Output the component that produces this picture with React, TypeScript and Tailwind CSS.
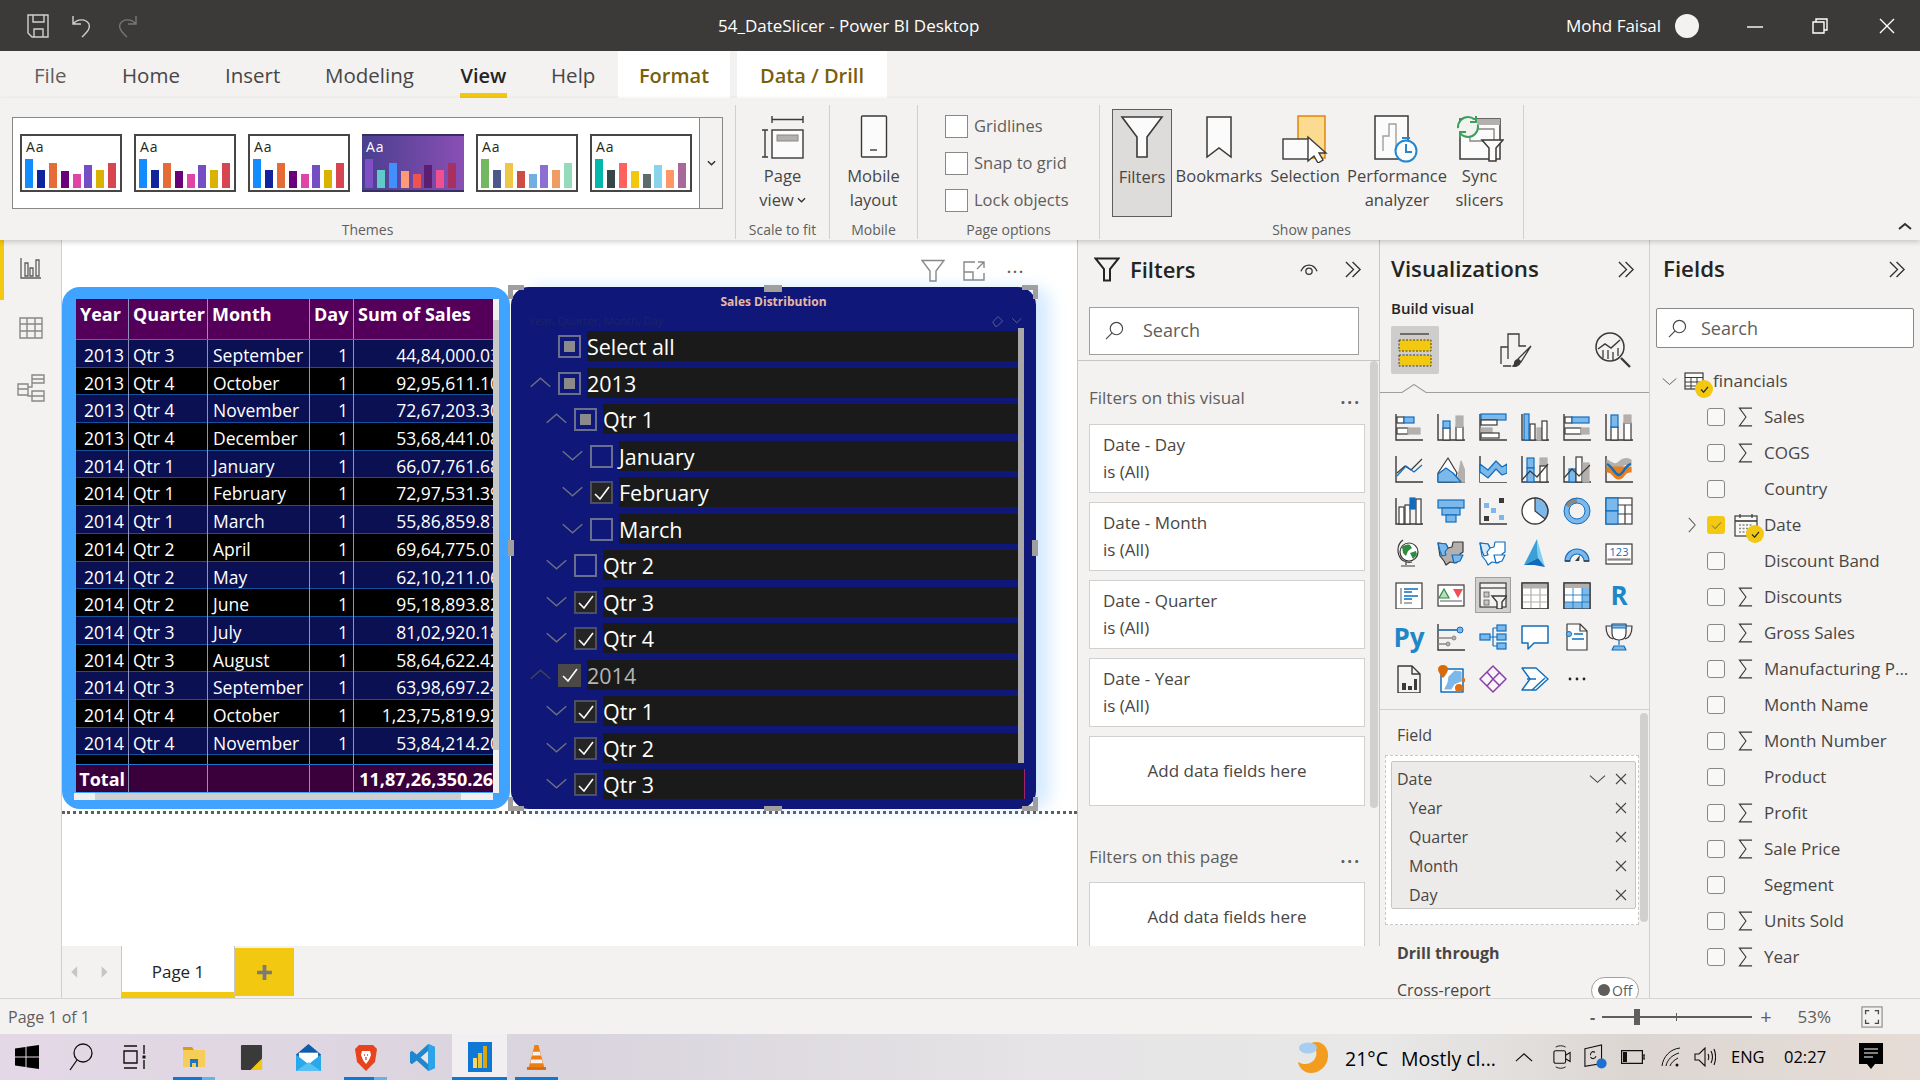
import type { ReactNode } from "react"

const D = "#3b3a39"
const B = "#106ebe"
const L = "#7db8ea"
const G = "#b3b0ad"

function Bx({ x, y, w, h, f = "#fff", s = D }: { x: number; y: number; w: number; h: number; f?: string; s?: string }) {
  return <rect x={x} y={y} width={w} height={h} fill={f} stroke={s} strokeWidth={1.2} />
}
function P({ d, f = "none", s = D, w = 1.2 }: { d: string; f?: string; s?: string; w?: number }) {
  return <path d={d} fill={f} stroke={s} strokeWidth={w} strokeLinejoin="round" />
}
const Axis = () => <path d="M1 1v26h27" fill="none" stroke={D} strokeWidth={1.4} />

function Chev({ dir, className, color = "#605e5c" }: { dir: "up" | "down" | "right"; className: string; color?: string }) {
  const d = dir === "up" ? "M1 10 10 2l9 8" : dir === "down" ? "M1 2l9 8 9-8" : "M6 1l8 9-8 9"
  const vb = dir === "right" ? "0 0 20 20" : "0 0 20 12"
  return (
    <svg viewBox={vb} className={className}>
      <path d={d} fill="none" stroke={color} strokeWidth={1.3} />
    </svg>
  )
}

function Cross() {
  return (
    <svg viewBox="0 0 12 12" className="w-[12px] h-[12px]">
      <path d="M1 1l10 10M11 1 1 11" stroke="#484644" strokeWidth={1.1} />
    </svg>
  )
}

function DoubleChev() {
  return (
    <svg viewBox="0 0 20 18" className="w-[19px] h-[17px]">
      <path d="M2 1l8 8-8 8M9 1l8 8-8 8" fill="none" stroke="#323130" strokeWidth={1.4} />
    </svg>
  )
}

function SearchGlass() {
  return (
    <svg viewBox="0 0 20 20" className="w-[19px] h-[19px]">
      <circle cx="12" cy="8" r="6.5" fill="none" stroke="#484644" strokeWidth={1.2} />
      <path d="M7.5 12.5 1 19" stroke="#484644" strokeWidth={1.2} />
    </svg>
  )
}

const themes = [
  { colors: ["#118DFF", "#12239E", "#E66C37", "#6B007B", "#E044A7", "#744EC2", "#D9B300", "#D64550"] },
  { colors: ["#118DFF", "#12239E", "#E66C37", "#6B007B", "#E044A7", "#744EC2", "#D9B300", "#D64550"] },
  { colors: ["#118DFF", "#12239E", "#E66C37", "#6B007B", "#E044A7", "#744EC2", "#D9B300", "#D64550"] },
  { colors: ["#7F4FC4", "#5ECBC8", "#4090FF", "#FF9A76", "#F0524F", "#5C1F70", "#F0508F", "#A83060"], dark: true },
  { colors: ["#73B761", "#4A588A", "#ECC846", "#CD4C46", "#71AFE2", "#8D6FD1", "#EE9E64", "#95DABB"] },
  { colors: ["#01B8AA", "#374649", "#FD625E", "#F2C80F", "#5F6B6D", "#8AD4EB", "#FE9666", "#A66999"] },
]
const barHeights = [29, 18, 25, 17, 14, 23, 18, 25]

function ThemeThumb({ colors, dark }: { colors: string[]; dark?: boolean }) {
  return (
    <div
      className={
        dark
          ? "w-[102px] h-[58px] shrink-0 border-y-2 border-[#35305f] bg-[linear-gradient(90deg,#4a3f8f,#8a4fb5)] px-[3px] text-white"
          : "w-[102px] h-[58px] shrink-0 border-2 border-[#484644] bg-white px-[3px] text-[#252423]"
      }
    >
      <div className="h-[23px] pl-[1px] text-[14px] leading-[21px] tracking-[1px]">Aa</div>
      <div className="h-[29px] flex items-end gap-[3.9px]">
        {colors.map((c, i) => (
          <div key={i} className="w-[8px]" style={{ height: barHeights[i], background: c }} />
        ))}
      </div>
    </div>
  )
}

function RibbonGroup({ label, className, children }: { label: string; className: string; children: ReactNode }) {
  return (
    <div className={"h-[134px] mt-[7px] border-r border-[#d2d0ce] flex flex-col shrink-0 " + className}>
      <div className="flex-1 flex min-h-0">{children}</div>
      <div className="h-[18px] text-[14px] leading-[18px] text-[#605e5c] text-center whitespace-nowrap">{label}</div>
    </div>
  )
}

function RibbonBtn({ className, icon, lines }: { className: string; icon: ReactNode; lines: ReactNode[] }) {
  return (
    <div className={"flex flex-col items-center shrink-0 pt-[10px] text-[#484644] " + className}>
      <div className="h-[49px] flex items-start justify-center">{icon}</div>
      {lines.map((l, i) => (
        <div key={i} className="text-[16.5px] leading-[24px] whitespace-nowrap">
          {l}
        </div>
      ))}
    </div>
  )
}

function RibbonCheck({ label }: { label: string }) {
  return (
    <div className="flex items-center h-[37px] text-[16.5px] text-[#605e5c]">
      <div className="w-[23px] h-[23px] bg-white border border-[#8a8886] mr-[6px]" />
      {label}
    </div>
  )
}

const salesRows = [
  ["2013", "Qtr 3", "September", "44,84,000.03"],
  ["2013", "Qtr 4", "October", "92,95,611.10"],
  ["2013", "Qtr 4", "November", "72,67,203.30"],
  ["2013", "Qtr 4", "December", "53,68,441.08"],
  ["2014", "Qtr 1", "January", "66,07,761.68"],
  ["2014", "Qtr 1", "February", "72,97,531.39"],
  ["2014", "Qtr 1", "March", "55,86,859.87"],
  ["2014", "Qtr 2", "April", "69,64,775.07"],
  ["2014", "Qtr 2", "May", "62,10,211.06"],
  ["2014", "Qtr 2", "June", "95,18,893.82"],
  ["2014", "Qtr 3", "July", "81,02,920.18"],
  ["2014", "Qtr 3", "August", "58,64,622.42"],
  ["2014", "Qtr 3", "September", "63,98,697.24"],
  ["2014", "Qtr 4", "October", "1,23,75,819.92"],
  ["2014", "Qtr 4", "November", "53,84,214.20"],
]

function SalesTable() {
  const line = "border-r border-[#8f94bd]"
  const grid = "grid grid-cols-[53px_79px_102px_44px_139px] text-white"
  return (
    <div className="w-[448px] h-[522px] shrink-0 rounded-[18px] bg-[#40a3ff] pt-[12px] pl-[14px] relative">
      <div className={grid + " w-[417px] h-[41px] bg-[#54005a] font-bold text-[18px] leading-[30px] border-b border-[#1f77d0]"}>
        <div className={line + " pl-[4px]"}>Year</div>
        <div className={line + " pl-[4px] whitespace-nowrap"}>Quarter</div>
        <div className={line + " pl-[4px]"}>Month</div>
        <div className={line + " pl-[4px]"}>Day</div>
        <div className="pl-[4px] whitespace-nowrap">Sum of Sales</div>
      </div>
      <div className="w-[417px] h-[424px] overflow-hidden bg-black">
        {salesRows.map((r, i) => (
          <div
            key={i}
            className={
              grid +
              " h-[27.7px] text-[17.5px] leading-[30px] border-b border-[#15509c] " +
              (i % 2 === 0 ? "bg-[#0a1052]" : "bg-black")
            }
          >
            <div className={line + " text-right pr-[4px]"}>{r[0]}</div>
            <div className={line + " pl-[4px]"}>{r[1]}</div>
            <div className={line + " pl-[5px] whitespace-nowrap"}>{r[2]}</div>
            <div className={line + " text-right pr-[5px]"}>1</div>
            <div className="overflow-hidden">
              <div className="w-[146px] text-right whitespace-nowrap">{r[3]}</div>
            </div>
          </div>
        ))}
        <div className={grid + " h-[10px]"}>
          <div className={line} />
          <div className={line} />
          <div className={line} />
          <div className={line} />
          <div />
        </div>
      </div>
      <div className={grid + " w-[417px] h-[28px] bg-[#3a003c] font-bold text-[18px] leading-[28px] border-t border-[#1f77d0]"}>
        <div className={line + " text-right pr-[3px]"}>Total</div>
        <div className={line} />
        <div className={line} />
        <div className={line} />
        <div className="overflow-hidden">
          <div className="w-[139px] text-right whitespace-nowrap">11,87,26,350.26</div>
        </div>
      </div>
      {/* scrollbars */}
      <div className="absolute left-[431px] top-[12px] w-[6px] h-[494px] bg-[#f0f0f0]">
        <div className="mt-[21px] h-[430px] bg-[#c8c8c8]" />
      </div>
      <div className="absolute left-[12px] top-[506px] w-[419px] h-[7px] bg-[#f0f0f0] pl-[21px]">
        <div className="w-[366px] h-[7px] bg-[#cfcfcf]" />
      </div>
    </div>
  )
}

type BoxState = "partial" | "none" | "check" | "hover"

function SlicerRow({ level, label, chev, state, last }: { level: 0 | 1 | 2; label: string; chev?: "up" | "down"; state: BoxState; last?: boolean }) {
  const indent = level === 0 ? "ml-[18px]" : level === 1 ? "ml-[34px]" : "ml-[50px]"
  const boxClass =
    state === "hover"
      ? "bg-[#4a4948] border-[#4a4948]"
      : state === "check"
        ? "bg-[#252525] border-[#4c4f63]"
        : "border-[#6a6f8e]"
  return (
    <div className="flex h-[30px] items-start shrink-0">
      <div className={"w-[23px] mr-[6px] pt-[8px] shrink-0 " + indent}>
        {chev && <Chev dir={chev} className="w-[23px] h-[13px]" color={state === "hover" ? "#45454e" : "#6e7080"} />}
      </div>
      <div className={"w-[23px] h-[23px] mt-[4px] mr-[6px] shrink-0 border-2 flex items-center justify-center " + boxClass}>
        {state === "partial" && <div className="w-[11px] h-[11px] bg-[#8a8a8a]" />}
        {(state === "check" || state === "hover") && (
          <svg viewBox="0 0 16 14" className="w-[16px] h-[14px]">
            <path d="M1 8l5 5 9-12" fill="none" stroke="#fff" strokeWidth={1.6} />
          </svg>
        )}
      </div>
      <div
        className={
          "h-[30px] flex-1 bg-[#1a1a1a] text-[21.5px] leading-[31px] " +
          (state === "hover" ? "text-[#b5b5b5] " : "text-white ") +
          (last ? "mr-[11px] border-r border-[#a0246e]" : "mr-[18px]")
        }
      >
        {label}
      </div>
    </div>
  )
}

function Handle({ className }: { className: string }) {
  return <div className={"absolute bg-[#a19f9d] " + className} />
}

function Slicer() {
  return (
    <div className="w-[525px] h-[522px] ml-[1px] shrink-0 rounded-[18px] bg-[#0f1878] relative shadow-[14px_0_16px_rgba(64,160,255,0.22)]">
      <div className="h-[24px] pt-[6px] text-center text-[12px] leading-[18px] font-bold text-[#e9b7a5]">Sales Distribution</div>
      <div className="h-[20px] pl-[18px] flex items-center text-[11px] text-[#1c2463]">
        Year, Quarter, Month, Day
        <svg viewBox="0 0 36 14" className="ml-auto mr-[13px] w-[32px] h-[14px]">
          <path d="M2 8l6-6 5 5-6 6H5z" fill="none" stroke="#5f6596" strokeWidth={1} />
          <path d="M24 4l5 5 5-5" fill="none" stroke="#5f6596" strokeWidth={1} />
        </svg>
      </div>
      <div className="flex flex-col gap-[6.5px]">
        <SlicerRow level={0} label="Select all" state="partial" />
        <SlicerRow level={0} label="2013" chev="up" state="partial" />
        <SlicerRow level={1} label="Qtr 1" chev="up" state="partial" />
        <SlicerRow level={2} label="January" chev="down" state="none" />
        <SlicerRow level={2} label="February" chev="down" state="check" />
        <SlicerRow level={2} label="March" chev="down" state="none" />
        <SlicerRow level={1} label="Qtr 2" chev="down" state="none" />
        <SlicerRow level={1} label="Qtr 3" chev="down" state="check" />
        <SlicerRow level={1} label="Qtr 4" chev="down" state="check" />
        <SlicerRow level={0} label="2014" chev="up" state="hover" />
        <SlicerRow level={1} label="Qtr 1" chev="down" state="check" />
        <SlicerRow level={1} label="Qtr 2" chev="down" state="check" />
        <SlicerRow level={1} label="Qtr 3" chev="down" state="check" last />
      </div>
      {/* slicer scrollbar */}
      <div className="absolute left-[507px] top-[41px] w-[6px] h-[435px] bg-[#a8a6a6]" />
      {/* selection handles */}
      <Handle className="left-[-3px] top-[-2px] w-[16px] h-[5px]" />
      <Handle className="left-[-3px] top-[-2px] w-[5px] h-[14px]" />
      <Handle className="right-[-2px] top-[-2px] w-[16px] h-[5px]" />
      <Handle className="right-[-2px] top-[-2px] w-[5px] h-[14px]" />
      <Handle className="left-[-3px] bottom-[-2px] w-[16px] h-[5px]" />
      <Handle className="left-[-3px] bottom-[-2px] w-[5px] h-[14px]" />
      <Handle className="right-[-2px] bottom-[-2px] w-[16px] h-[5px]" />
      <Handle className="right-[-2px] bottom-[-2px] w-[5px] h-[14px]" />
      <Handle className="left-[253px] top-[-2px] w-[18px] h-[7px]" />
      <Handle className="left-[253px] bottom-[-2px] w-[18px] h-[5px]" />
      <Handle className="left-[-3px] top-[253px] w-[6px] h-[16px]" />
      <Handle className="right-[-2px] top-[253px] w-[6px] h-[16px]" />
    </div>
  )
}

function FilterCard({ title }: { title: string }) {
  return (
    <div className="w-[276px] h-[69px] mb-[9px] bg-white border border-[#d2d0ce] pl-[13px] pb-[2px] flex flex-col justify-center text-[17px] leading-[27px] text-[#484644]">
      <div>{title}</div>
      <div>is (All)</div>
    </div>
  )
}

function AddFields() {
  return (
    <div className="w-[276px] h-[70px] bg-white border border-[#d2d0ce] flex items-center justify-center text-[17px] text-[#484644] shrink-0">
      Add data fields here
    </div>
  )
}

function FiltersPane() {
  return (
    <div className="w-[303px] h-[706px] shrink-0 border-l border-r border-[#c8c6c4] bg-[#f3f2f1] relative overflow-hidden">
      <div className="h-[58px] flex items-center pl-[16px] pr-[16px]">
        <svg viewBox="0 0 26 26" className="w-[26px] h-[26px] mr-[10px]">
          <path d="M1.5 2.5h23L16 13v11.5h-6V13z" fill="none" stroke="#252423" strokeWidth={2} />
        </svg>
        <span className="text-[22px] font-semibold text-[#252423]">Filters</span>
        <svg viewBox="0 0 20 14" className="ml-auto w-[18px] h-[13px] mr-[26px]">
          <path d="M1 9c4-9 14-9 18 0" fill="none" stroke="#323130" strokeWidth={1.4} />
          <circle cx="10" cy="9" r="3.5" fill="none" stroke="#323130" strokeWidth={1.4} />
        </svg>
        <DoubleChev />
      </div>
      <div className="ml-[11px] mt-[9px] w-[270px] h-[48px] bg-white border border-[#a19f9d] flex items-center pl-[15px] pb-[2px] text-[18px] text-[#605e5c]">
        <SearchGlass />
        <span className="ml-[19px]">Search</span>
      </div>
      <div className="mt-[5px] h-[1px] bg-[#c8c6c4]" />
      <div className="h-[63px] pt-[11px] flex items-center pl-[11px] pr-[18px] text-[17px] text-[#605e5c]">
        Filters on this visual
        <span className="ml-auto font-bold tracking-[2px]">...</span>
      </div>
      <div className="ml-[11px]">
        <FilterCard title="Date - Day" />
        <FilterCard title="Date - Month" />
        <FilterCard title="Date - Quarter" />
        <FilterCard title="Date - Year" />
        <AddFields />
        <div className="h-[76px] pt-[26px] flex items-center pr-[18px] text-[17px] text-[#605e5c]">
          Filters on this page
          <span className="ml-auto font-bold tracking-[2px]">...</span>
        </div>
        <AddFields />
      </div>
      <div className="absolute left-[292px] top-[121px] w-[8px] h-[447px] rounded-full bg-[#d2d0ce]" />
    </div>
  )
}

const vizIcons: ReactNode[] = [
  <><Axis /><Bx x={2} y={4} w={7} h={6} /><Bx x={9} y={4} w={10} h={6} f={L} s={B} /><Bx x={2} y={15} w={11} h={6} /><Bx x={13} y={15} w={12} h={6} f={G} s={G} /></>,
  <><Axis /><Bx x={6} y={15} w={7} h={12} /><Bx x={6} y={8} w={7} h={7} f={L} s={B} /><Bx x={19} y={14} w={7} h={13} /><Bx x={19} y={3} w={7} h={11} f={G} s={G} /></>,
  <><Axis /><Bx x={2} y={1} w={25} h={6} f={L} s={B} /><Bx x={2} y={7} w={16} h={5} /><Bx x={2} y={15} w={11} h={5} f={G} s={G} /><Bx x={2} y={20} w={18} h={5} /></>,
  <><Axis /><Bx x={3} y={1} w={5} h={26} f={L} s={B} /><Bx x={9} y={11} w={5} h={16} /><Bx x={16} y={15} w={5} h={12} f={G} s={G} /><Bx x={21} y={8} w={5} h={19} /></>,
  <><Axis /><Bx x={2} y={4} w={7} h={6} /><Bx x={9} y={4} w={17} h={6} f={L} s={B} /><Bx x={2} y={15} w={16} h={6} /><Bx x={18} y={15} w={8} h={6} f={G} s={G} /></>,
  <><Axis /><Bx x={6} y={14} w={7} h={13} /><Bx x={6} y={2} w={7} h={12} f={L} s={B} /><Bx x={19} y={10} w={7} h={17} /><Bx x={19} y={2} w={7} h={8} f={G} s={G} /></>,
  <><Axis /><P d="M2 18l8-7 6 4 11-11" s={D} /><P d="M2 21l9-10 8 6 8-7" s={B} /></>,
  <><P d="M1 27h27" w={1.4} /><P d="M20 27l4-21 4 10v11z" f={G} s={G} /><P d="M1 18 11 3l9 15-3 9H1z" f="#fff" /><P d="M1 27v-8l8-6 7 5 8 9z" f={L} s={B} /></>,
  <><Axis /><P d="M1 9l8 6 8-9 6 6 5-3v9l-5 2-6-6-8 9-8-6z" f={L} s={B} /><P d="M1 18l8 6 8-7 6 5 5-2v7H1z" f="#f3f3f3" s={D} w={0} /></>,
  <><Axis /><Bx x={6} y={3} w={7} h={10} f={L} s={B} /><Bx x={6} y={13} w={7} h={14} f={L} s={B} /><Bx x={19} y={3} w={7} h={8} f={G} s={G} /><Bx x={19} y={11} w={7} h={16} /><P d="M1 25l8-9 7 6 11-13" /></>,
  <><Axis /><Bx x={6} y={14} w={7} h={13} f={L} s={B} /><Bx x={13} y={2} w={6} h={25} /><Bx x={20} y={8} w={6} h={19} f={G} s={G} /><P d="M1 23l8-9 7 7 11-11" /></>,
  <><Axis /><P d="M2 5c6 3 8 6 12 2s8-4 12-2v5c-5-2-7 0-12 3S6 12 2 10z" f={G} s={G} /><P d="M2 12h24v5c-7-2-6 7-12 7S8 16 2 17z" f="#e67e22" s="#e67e22" /><P d="M2 9c6 3 8 11 12 11s6-10 12-11" s={B} w={2.4} /></>,
  <><Axis /><Bx x={4} y={10} w={5} h={17} /><Bx x={10} y={8} w={5} h={19} /><Bx x={15} y={1} w={5} h={11} f={B} s={B} /><Bx x={21} y={2} w={5} h={25} /></>,
  <><Bx x={1} y={3} w={26} h={8} f={L} s={B} /><Bx x={5} y={11} w={18} h={7} f={L} s={B} /><Bx x={9} y={18} w={10} h={7} f={L} s={B} /></>,
  <><Axis /><rect x={5} y={6} width={5} height={5} fill={L} /><rect x={20} y={1} width={5} height={5} fill={D} /><rect x={12} y={11} width={5} height={5} fill={L} /><rect x={5} y={19} width={5} height={5} fill={D} /><rect x={20} y={18} width={5} height={5} fill={L} /></>,
  <><circle cx="14" cy="14" r="13" fill="#fff" stroke={D} strokeWidth={1.3} /><path d="M14 1a13 13 0 0 1 10 21L14 14z" fill={L} stroke={D} strokeWidth={1.2} /></>,
  <><circle cx="14" cy="14" r="10.5" fill="none" stroke={L} strokeWidth={5} /><path d="M4 9A11 11 0 0 1 14 3.500" fill="none" stroke="#8a8886" strokeWidth={5} /><circle cx="14" cy="14" r="13" fill="none" stroke={B} strokeWidth={1} /><circle cx="14" cy="14" r="8" fill="#f3f2f1" stroke={B} strokeWidth={1} /></>,
  <><Bx x={1} y={1} w={26} h={26} /><Bx x={1} y={1} w={12} h={13} f={L} s={B} /><Bx x={1} y={14} w={12} h={13} f={L} s={B} /><path d="M13 8h14M20 8v19M13 17h14" stroke={D} strokeWidth={1.2} /></>,
  <><circle cx="14" cy="13" r="9" fill="#fff" stroke={D} strokeWidth={1.2} /><path d="M7 8c3-2 5-3 8-2l2 3-4 3-2 5-3-3zM15 14l6-2 1 4-4 4z" fill="#2e8b40" /><path d="M8 1C2 5 1 15 7 21c3 2 6 3 10 2M11 23v3M6 27h14" fill="none" stroke={D} strokeWidth={1.2} /></>,
  <><P d="M1 4l8 1 2 4 4-1 1-5h10v10l-3 2 1 4-5 5-6-1-4 3-2-4-4-5z" f={G} /><P d="M1 4l8 1 2 4-3 4 1 3-4 1-2-5z" f={L} s={B} /><P d="M15 16h11l-3 6-6 2z" f={L} s={B} /></>,
  <><P d="M1 4l8 1 2 4 4-1 1-5h10v10l-3 2 1 4-5 5-6-1-4 3-2-4-4-5z" f="#fff" s={B} /><P d="M1 4l8 1 2 4-3 4 1 3-4 1-2-5z" f="#d7e9f8" s={B} /><P d="M15 16h11l-3 6-6 2z" f="#fff" s={B} /></>,
  <><path d="M16 0 3 26l14-7z" fill="#3aa0d8" /><path d="M16 0l8 28-7-9z" fill="#7fd0f0" /><path d="M17 19l-14 7h10l11 2z" fill="#0f6cbd" /></>,
  <><path d="M2 22a12 12 0 0 1 24 0h-5a7 7 0 0 0-14 0z" fill={L} stroke={B} strokeWidth={1.2} /><path d="M2 22h5M21 22h5" stroke={D} strokeWidth={1.3} /><path d="M12 22l5-6-1 6z" fill={D} /></>,
  <><Bx x={1} y={5} w={26} h={20} /><Bx x={3} y={20} w={22} h={1} f="#8a8886" s="#8a8886" /><text x={14} y={17} textAnchor="middle" fontSize="11" fill={B} fontFamily="Open Sans">123</text></>,
  <><Bx x={1} y={2} w={26} h={26} /><path d="M6 7v16" stroke="#8a8886" strokeWidth={1.4} /><path d="M9 8h14M9 11h8M9 15h14M9 18h8" stroke={B} strokeWidth={1.6} /><path d="M9 22h8" stroke="#8a8886" strokeWidth={1.4} /></>,
  <><Bx x={1} y={4} w={26} h={21} /><path d="M7 8l5 9H2z" fill="#b4e0bc" stroke="#2e8b40" strokeWidth={1.2} /><path d="M16 8h10l-5 9z" fill="#f05050" /><path d="M3 20h22" stroke="#8a8886" strokeWidth={1.4} /></>,
  <><Bx x={1} y={2} w={26} h={24} f="#f3f2f1" /><path d="M1 7h26" stroke={D} strokeWidth={1.2} /><rect x={5} y={11} width={5} height={5} fill="#c8c6c4" stroke="#605e5c" strokeWidth={0.8} /><rect x={5} y={19} width={5} height={5} fill="#c8c6c4" stroke="#605e5c" strokeWidth={0.8} /><path d="M13 15h15l-5 6v7h-5v-7z" fill="#f3f2f1" stroke={D} strokeWidth={1.4} /></>,
  <><Bx x={1} y={2} w={26} h={26} /><rect x={1} y={2} width={26} height={5} fill={G} /><path d="M1 7h26M1 14h26M1 21h26M10 7v21M19 7v21" stroke={G} strokeWidth={1.2} /><rect x={1} y={2} width={26} height={26} fill="none" stroke={D} strokeWidth={1.3} /></>,
  <><Bx x={1} y={2} w={26} h={26} /><rect x={1} y={2} width={26} height={5} fill={G} /><rect x={19} y={7} width={8} height={21} fill={L} /><rect x={1} y={21} width={26} height={7} fill={L} /><path d="M1 14h26M1 21h26M10 7v21M19 7v21" stroke={B} strokeWidth={0.8} /><rect x={1} y={2} width={26} height={26} fill="none" stroke={D} strokeWidth={1.3} /></>,
  null,
  null,
  <><Axis /><path d="M1 7h20M1 15h15M1 21h10" stroke="#8a8886" strokeWidth={1.3} /><path d="M1 7h20" stroke={B} strokeWidth={1.3} /><circle cx="23" cy="7" r="3" fill={L} stroke={B} /><circle cx="17" cy="15" r="2" fill={G} stroke="#8a8886" /><circle cx="11" cy="21" r="2" fill={G} stroke="#8a8886" /></>,
  <><Bx x={1} y={11} w={10} h={6} f={L} s={B} /><Bx x={18} y={2} w={9} h={6} f={L} s={B} /><Bx x={18} y={11} w={9} h={6} f={L} s={B} /><Bx x={18} y={20} w={9} h={6} f={L} s={B} /><path d="M11 14h7M14 5v18M14 5h4M14 23h4" stroke={B} fill="none" strokeWidth={1.2} /></>,
  <><P d="M1 3h26v17H13l-6 6v-6H1z" f="#fff" s={B} w={1.5} /></>,
  <><P d="M4 1h13l7 7v19H4z" f="#fbfbfb" /><P d="M17 1v7h7" /><circle cx="6" cy="11" r="2.500" fill={L} stroke={B} /><path d="M11 11h9M9 16h12" stroke={B} strokeWidth={1.3} /></>,
  <><P d="M7 3H1c0 9 3 12 7 13M21 3h6c0 9-3 12-7 13" /><P d="M7 1h14v9c0 5-3 7-7 7s-7-2-7-7z" f="#fff" /><rect x={7} y={2} width={14} height={3} fill={L} stroke={B} /><P d="M14 17v5M9 23h10l2 4H7z" f={L} s={B} /></>,
  <><P d="M3 1h14l8 8v19H3z" f="#f3f2f1" w={1.4} /><P d="M17 1v8h8" w={1.4} /><rect x={7} y={18} width={4} height={7} fill={D} /><rect x={13} y={21} width={4} height={4} fill={D} /><rect x={19} y={14} width={3} height={11} fill={D} /></>,
  <><P d="M4 4h22v23H4z" s={B} w={1.5} f="#fff" /><P d="M8 24l3-6 1-6 6-6 6 1v9l-7 3-3 5z" f={L} s={L} /><path d="M6 0c3 0 5 2 5 4 0 4-5 9-5 9S1 8 1 4c0-2 2-4 5-4z" fill="#d96a0a" /><circle cx="22" cy="23" r="4" fill="#e0700f" /><circle cx="26.500" cy="15" r="2" fill="#e0700f" /></>,
  <><P d="M14 1l13 13-13 13L1 14z" s="#8b3fa8" w={1.5} f="#f9f3fb" /><P d="M8 7l6 7-6 7M14 14l7-7M14 14l7 7" s="#8b3fa8" w={1.5} /></>,
  <><P d="M1 3h14l12 11-12 11H1l8-11z" s={B} w={1.4} f="#fff" /><path d="M11 25l13-12M6 14h9" stroke={B} strokeWidth={1.4} /></>,
  <><circle cx="7" cy="14" r="1.4" fill="#252423" /><circle cx="14" cy="14" r="1.4" fill="#252423" /><circle cx="21" cy="14" r="1.4" fill="#252423" /></>,
]

function VizGrid() {
  return (
    <div className="ml-[8px] grid grid-cols-[repeat(6,42px)] auto-rows-[42px] w-[252px]">
      {vizIcons.map((n, i) => {
        if (i === 29) return <div key={i} className="flex items-center justify-center text-[#1f86c7] font-bold text-[26px]">R</div>
        if (i === 30) return <div key={i} className="flex items-center justify-center text-[#1f86c7] font-bold text-[26px]">Py</div>
        return (
          <div key={i} className="flex items-center justify-center">
            <div className={i === 26 ? "w-[36px] h-[36px] flex items-center justify-center bg-[#d2d0ce] border border-[#a19f9d]" : ""}>
              <svg viewBox="0 0 28 28" className="w-[28px] h-[28px] block">{n}</svg>
            </div>
          </div>
        )
      })}
    </div>
  )
}

function WellRow({ label, first }: { label: string; first?: boolean }) {
  return (
    <div className={"flex items-center h-[29px] text-[16px] text-[#484644] " + (first ? "pl-[5px]" : "pl-[17px]")}>
      {label}
      {first && <Chev dir="down" className="ml-auto w-[17px] h-[10px] mr-[9px]" color="#484644" />}
      <span className={first ? "mr-[8px]" : "ml-auto mr-[8px]"}>
        <Cross />
      </span>
    </div>
  )
}

function VizPane() {
  return (
    <div className="w-[270px] h-[758px] shrink-0 border-r border-[#d2d0ce] relative overflow-hidden">
      <div className="h-[58px] pl-[11px] pr-[13px] flex items-center">
        <span className="text-[22.3px] font-semibold text-[#252423]">Visualizations</span>
        <span className="ml-auto">
          <DoubleChev />
        </span>
      </div>
      <div className="h-[20px] pl-[11px] text-[15px] leading-[20px] font-semibold text-[#252423]">Build visual</div>
      <div className="h-[48px] mt-[8px] flex items-center">
        <div className="ml-[11px] w-[48px] h-[48px] bg-[#cfcdcb] rounded-[2px] flex items-center justify-center">
          <svg viewBox="0 0 36 36" className="w-[36px] h-[36px]">
            <path d="M3 2h29" stroke={D} strokeWidth={1.3} />
            <rect x={2} y={8} width={32} height={11} fill="#f2c811" stroke={D} strokeWidth={1} strokeDasharray="2 1.5" />
            <rect x={2} y={23} width={32} height={11} fill="#f2c811" stroke={D} strokeWidth={1} strokeDasharray="2 1.5" />
          </svg>
        </div>
        <svg viewBox="0 0 34 36" className="ml-[60px] w-[34px] h-[36px]">
          <path d="M2 32V15h7V2h11v12h7M12 34H4M9 15v12" fill="none" stroke={D} strokeWidth={1.3} />
          <path d="M32 14 19 27l3 3z" fill="none" stroke={D} strokeWidth={1.3} />
          <path d="M19 27c-3 0-4 3-4 4s-1 3-3 3c3 2 9 1 10-4z" fill={D} />
        </svg>
        <svg viewBox="0 0 38 38" className="ml-[61px] w-[38px] h-[38px]">
          <circle cx="16" cy="16" r="14" fill="none" stroke={D} strokeWidth={1.5} />
          <path d="M4 18l7-5 6 4 9-8" fill="none" stroke={D} strokeWidth={1.5} />
          <path d="M9 19v8M14 19v9M19 21v8M24 17v8" stroke={D} strokeWidth={1.3} />
          <path d="M27 27l9 9" stroke={D} strokeWidth={2.4} />
        </svg>
      </div>
      <svg viewBox="0 0 270 10" className="block w-[270px] h-[10px] mt-[10px]">
        <path d="M0 8.500h22l12-8 12 8h224" fill="none" stroke="#a19f9d" strokeWidth={1.2} />
      </svg>
      <div className="h-[12px]" />
      <VizGrid />
      <div className="mt-[9px] h-[1px] bg-[#d2d0ce]" />
      <div className="mt-[13px] h-[24px] pl-[17px] text-[16px] leading-[24px] text-[#484644]">Field</div>
      <div className="mt-[8px] ml-[5px] w-[254px] h-[170px] bg-white border border-dashed border-[#c8c6c4] p-[5px]">
        <div className="w-[245px] h-[148px] bg-[#edebe9] border border-[#c8c6c4] rounded-[2px] pt-[2px]">
          <WellRow label="Date" first />
          <WellRow label="Year" />
          <WellRow label="Quarter" />
          <WellRow label="Month" />
          <WellRow label="Day" />
        </div>
      </div>
      <div className="mt-[16px] h-[24px] pl-[17px] text-[16px] leading-[24px] font-bold text-[#484644]">Drill through</div>
      <div className="mt-[10px] h-[30px] pl-[17px] pr-[10px] flex items-center text-[16px] text-[#484644]">
        Cross-report
        <div className="ml-auto w-[48px] h-[27px] rounded-full border border-[#a19f9d] bg-white flex items-center pl-[6px] text-[14px] text-[#605e5c]">
          <div className="w-[12px] h-[12px] rounded-full bg-[#605e5c] mr-[2px]" />
          Off
        </div>
      </div>
      <div className="absolute left-[260px] top-[473px] w-[8px] h-[209px] rounded-full bg-[#d2d0ce]" />
    </div>
  )
}

function Sigma() {
  return (
    <svg viewBox="0 0 16 22" className="ml-[13px] w-[15px] h-[22px]">
      <path d="M15 1.500H1.500L8.500 11l-7 9.500H15" fill="none" stroke="#3b3a39" strokeWidth={1.2} />
    </svg>
  )
}

const fieldRows = [
  { name: "Sales", sum: true },
  { name: "COGS", sum: true },
  { name: "Country" },
  { name: "Date", date: true },
  { name: "Discount Band" },
  { name: "Discounts", sum: true },
  { name: "Gross Sales", sum: true },
  { name: "Manufacturing P...", sum: true },
  { name: "Month Name" },
  { name: "Month Number", sum: true },
  { name: "Product" },
  { name: "Profit", sum: true },
  { name: "Sale Price", sum: true },
  { name: "Segment" },
  { name: "Units Sold", sum: true },
  { name: "Year", sum: true },
]

function Badge({ className }: { className: string }) {
  return (
    <div className={"absolute w-[18px] h-[18px] rounded-full bg-[#f2c811] flex items-center justify-center " + className}>
      <svg viewBox="0 0 10 8" className="w-[9px] h-[7px]">
        <path d="M1 4l3 3 5-6" fill="none" stroke="#323130" strokeWidth={1.6} />
      </svg>
    </div>
  )
}

function FieldsPane() {
  return (
    <div className="w-[270px] h-[758px] shrink-0 overflow-hidden">
      <div className="h-[58px] pl-[13px] pr-[13px] flex items-center">
        <span className="text-[22.3px] font-semibold text-[#252423]">Fields</span>
        <span className="ml-auto">
          <DoubleChev />
        </span>
      </div>
      <div className="ml-[6px] mr-[6px] mt-[10px] h-[40px] bg-white border border-[#8a8886] rounded-[2px] flex items-center pl-[11px] text-[18px] text-[#605e5c]">
        <SearchGlass />
        <span className="ml-[14px]">Search</span>
      </div>
      <div className="h-[15px]" />
      <div className="flex items-center h-[36px] pl-[12px]">
        <Chev dir="down" className="w-[15px] h-[9px] mr-[7px]" />
        <div className="relative mr-[9px]">
          <svg viewBox="0 0 20 18" className="w-[20px] h-[18px] block">
            <rect x={1} y={1} width={18} height={16} fill="#fbfbfb" stroke={D} strokeWidth={1.2} />
            <path d="M1 5.500h18M1 10h18M1 14h18M7 5v12M13 5v12" stroke={D} strokeWidth={1} />
          </svg>
          <Badge className="left-[11px] top-[8px]" />
        </div>
        <span className="text-[17px] text-[#484644]">financials</span>
      </div>
      {fieldRows.map((r) => (
        <div key={r.name} className="flex items-center h-[36px] pl-[34px] text-[17px] text-[#484644]">
          <div className="w-[16px] mr-[7px] flex justify-center">
            {r.date && <Chev dir="right" className="w-[16px] h-[16px]" />}
          </div>
          <div
            className={
              r.date
                ? "w-[18px] h-[18px] rounded-[3px] bg-[#f2c811] flex items-center justify-center shrink-0"
                : "w-[18px] h-[18px] rounded-[3px] border border-[#8a8886] bg-[#f8f8f7] shrink-0"
            }
          >
            {r.date && (
              <svg viewBox="0 0 12 10" className="w-[11px] h-[9px]">
                <path d="M1 5l3.500 3.500L11 1.500" fill="none" stroke="#605e5c" strokeWidth={1} />
              </svg>
            )}
          </div>
          <div className="w-[39px] h-[22px] shrink-0 relative">
            {r.sum && <Sigma />}
            {r.date && (
              <>
                <svg viewBox="0 0 24 24" className="ml-[9px] w-[24px] h-[24px] -mt-[1px]">
                  <rect x={1} y={3} width={22} height={20} fill="#f8f8f7" stroke={D} strokeWidth={1.2} />
                  <path d="M1 8h22" stroke={D} strokeWidth={1.6} />
                  <path d="M6 1v4M18 1v4" stroke={D} strokeWidth={1.2} />
                  <path d="M5 12h14M5 15.500h14M5 19h14" stroke="#8a8886" strokeWidth={1.4} strokeDasharray="2 1.500" />
                </svg>
                <Badge className="left-[21px] top-[11px]" />
              </>
            )}
          </div>
          <span className="whitespace-nowrap">{r.name}</span>
        </div>
      ))}
    </div>
  )
}

function App() {
  const tab = "text-[20.5px] leading-[49px] text-center whitespace-nowrap shrink-0"
  const tabOn = "text-[20px] leading-[49px] text-center whitespace-nowrap shrink-0 font-semibold"
  return (
    <div className="w-[1920px] h-[1080px] overflow-hidden flex flex-col bg-[#f3f2f1] font-['Open_Sans',sans-serif] text-[#323130]">
      {/* title bar */}
      <div className="h-[51px] shrink-0 bg-[#3b3a39] flex items-center text-white">
        <svg viewBox="0 0 22 24" className="ml-[27px] w-[22px] h-[24px]">
          <path d="M1 1h20v22H5l-4-4z" fill="none" stroke="#d2d0ce" strokeWidth={1.4} />
          <path d="M6 1v7h11V1M7 23v-8h9v8" fill="none" stroke="#d2d0ce" strokeWidth={1.4} />
        </svg>
        <svg viewBox="0 0 22 24" className="ml-[22px] w-[22px] h-[24px]">
          <path d="M2 2v8h8M2 10c5-6 13-5 16 0 2 5-3 9-7 13" fill="none" stroke="#d2d0ce" strokeWidth={1.4} />
        </svg>
        <svg viewBox="0 0 22 24" className="ml-[23px] w-[22px] h-[24px]">
          <path d="M20 2v8h-8M20 10c-5-6-13-5-16 0-2 5 3 9 7 13" fill="none" stroke="#797775" strokeWidth={1.4} />
        </svg>
        <div className="ml-[580px] w-[264px] text-[17px] pt-[1px] whitespace-nowrap">54_DateSlicer - Power BI Desktop</div>
        <div className="ml-auto text-[17px] pt-[1px] whitespace-nowrap">Mohd Faisal</div>
        <div className="ml-[14px] w-[24px] h-[24px] rounded-full bg-[#f3f2f1]" />
        <svg viewBox="0 0 16 16" className="ml-[48px] w-[16px] h-[16px]">
          <path d="M0 9h16" stroke="#fff" strokeWidth={1.4} />
        </svg>
        <svg viewBox="0 0 16 16" className="ml-[49px] w-[16px] h-[16px]">
          <path d="M1 4h11v11H1zM4 4V1h11v11h-3" fill="none" stroke="#fff" strokeWidth={1.4} />
        </svg>
        <svg viewBox="0 0 16 16" className="ml-[51px] mr-[25px] w-[16px] h-[16px]">
          <path d="M1 1l14 14M15 1 1 15" stroke="#fff" strokeWidth={1.4} />
        </svg>
      </div>
      {/* ribbon tabs */}
      <div className="h-[47px] shrink-0 flex">
        <div className={tab + " ml-[34px] w-[32px] text-[#605e5c]"}>File</div>
        <div className={tab + " ml-[56px] w-[56px] text-[#484644]"}>Home</div>
        <div className={tab + " ml-[47px] w-[53px] text-[#484644]"}>Insert</div>
        <div className={tab + " ml-[47px] w-[89px] text-[#484644]"}>Modeling</div>
        <div className={tabOn + " ml-[46px] w-[47px] text-[#252423] border-b-[5px] border-[#f2c811] h-[47px]"}>View</div>
        <div className={tab + " ml-[44px] w-[44px] text-[#484644]"}>Help</div>
        <div className={tabOn + " ml-[23px] w-[112px] bg-white text-[#7a5f0b]"}>Format</div>
        <div className={tabOn + " ml-[7px] w-[150px] bg-white text-[#7a5f0b]"}>Data / Drill</div>
      </div>
      {/* ribbon */}
      <div className="h-[142px] shrink-0 flex relative z-10 shadow-[0_2px_5px_rgba(0,0,0,0.18)] bg-[#f3f2f1]">
        <RibbonGroup label="Themes" className="w-[736px]">
          <div className="ml-[12px] mt-[12px] w-[711px] h-[92px] bg-white border border-[#8a8886] flex items-center">
            <div className="flex gap-[12px] pl-[7px] pb-[1px] w-[687px]">
              {themes.map((t, i) => (
                <ThemeThumb key={i} colors={t.colors} dark={t.dark} />
              ))}
            </div>
            <div className="w-[23px] h-[90px] bg-[#f3f2f1] border-l border-[#8a8886] flex items-center justify-center">
              <svg viewBox="0 0 10 6" className="w-[9px] h-[6px]">
                <path d="M1 1l4 4 4-4" fill="none" stroke="#323130" strokeWidth={1.6} />
              </svg>
            </div>
          </div>
        </RibbonGroup>
        <RibbonGroup label="Scale to fit" className="w-[94px]">
          <RibbonBtn
            className="w-[93px]"
            icon={
              <svg viewBox="0 0 44 44" className="w-[44px] h-[44px]">
                <path d="M11 1v7M42 1v7M11 4.500h31M1 15h6M1 42h6M4 15v27" fill="none" stroke={D} strokeWidth={1.4} />
                <rect x={11} y={15} width={31} height={28} fill="#fbfbfb" stroke={D} strokeWidth={1.4} />
                <rect x={16} y={20} width={21} height={6} fill="#b3b0ad" stroke="#8a8886" strokeWidth={1} />
              </svg>
            }
            lines={[
              "Page",
              <span key="v" className="flex items-center gap-[3px]">
                view
                <svg viewBox="0 0 10 6" className="w-[9px] h-[6px]">
                  <path d="M1 1l4 4 4-4" fill="none" stroke="#323130" strokeWidth={1.4} />
                </svg>
              </span>,
            ]}
          />
        </RibbonGroup>
        <RibbonGroup label="Mobile" className="w-[88px]">
          <RibbonBtn
            className="w-[87px]"
            icon={
              <svg viewBox="0 0 28 44" className="w-[28px] h-[44px]">
                <rect x={1.500} y={1} width={25} height={41} rx={1} fill="#fbfbfb" stroke={D} strokeWidth={1.4} />
                <path d="M10 35h7" stroke={D} strokeWidth={1.4} />
              </svg>
            }
            lines={["Mobile", "layout"]}
          />
        </RibbonGroup>
        <RibbonGroup label="Page options" className="w-[182px]">
          <div className="pl-[27px] pt-[3px] flex flex-col">
            <RibbonCheck label="Gridlines" />
            <RibbonCheck label="Snap to grid" />
            <RibbonCheck label="Lock objects" />
          </div>
        </RibbonGroup>
        <RibbonGroup label="Show panes" className="w-[424px]">
          <div className="ml-[12px] mt-[4px] w-[60px] h-[108px] bg-[#dddcda] border border-[#605e5c] flex flex-col items-center pt-[5px] text-[#484644] shrink-0">
            <div className="h-[50px]">
              <svg viewBox="0 0 44 44" className="w-[44px] h-[44px]">
                <path d="M2 2h40L27 22v20H17V22z" fill="#fbfbfb" stroke={D} strokeWidth={1.6} />
              </svg>
            </div>
            <div className="text-[16.5px] leading-[24px]">Filters</div>
          </div>
          <RibbonBtn
            className="w-[88px] ml-[3px]"
            icon={
              <svg viewBox="0 0 28 44" className="w-[28px] h-[44px]">
                <path d="M2 2h24v40L14 33 2 42z" fill="#fbfbfb" stroke={D} strokeWidth={1.5} />
              </svg>
            }
            lines={["Bookmarks"]}
          />
          <RibbonBtn
            className="w-[80px] ml-[2px]"
            icon={
              <svg viewBox="0 0 46 48" className="w-[46px] h-[48px]">
                <rect x={16} y={1} width={27} height={42} fill="#fadb8f" stroke="#e08000" strokeWidth={1.4} />
                <rect x={1} y={24} width={26} height={20} fill="#fbfbfb" stroke={D} strokeWidth={1.4} />
                <path d="M26 22v24l6-5 4 7 5-3-4-7h7z" fill="#fff" stroke={D} strokeWidth={1.4} />
              </svg>
            }
            lines={["Selection"]}
          />
          <RibbonBtn
            className="w-[102px] ml-[1px]"
            icon={
              <svg viewBox="0 0 46 48" className="w-[46px] h-[48px]">
                <rect x={1} y={1} width={33} height={43} fill="#fbfbfb" stroke={D} strokeWidth={1.5} />
                <path d="M9 36V21h6V9h7v25" fill="none" stroke="#a19f9d" strokeWidth={1.4} />
                <circle cx="32" cy="36" r="10.500" fill="#fbfbfb" stroke="#2487d0" strokeWidth={2} />
                <path d="M32 29v8h6M28 23h8" fill="none" stroke="#2487d0" strokeWidth={2} />
              </svg>
            }
            lines={["Performance", "analyzer"]}
          />
          <RibbonBtn
            className="w-[57px] ml-[3px]"
            icon={
              <svg viewBox="0 0 48 48" className="w-[48px] h-[48px]">
                <rect x={4} y={4} width={40} height={40} fill="#fbfbfb" stroke={D} strokeWidth={1.5} />
                <rect x={20} y={4} width={24} height={6} fill="#b3b0ad" />
                <path d="M14 14h24v12H14z" fill="none" stroke="#8a8886" strokeWidth={1.4} />
                <path d="M26 25h21L40 33v13h-7V33z" fill="#fbfbfb" stroke={D} strokeWidth={1.5} />
                <circle cx="12" cy="12" r="10" fill="#f3f2f1" stroke="#3aa15a" strokeWidth={2} strokeDasharray="24 6" />
                <path d="M20 1v6h-6M4 23v-6h6" fill="none" stroke="#3aa15a" strokeWidth={2} />
              </svg>
            }
            lines={["Sync", "slicers"]}
          />
        </RibbonGroup>
        <div className="ml-auto self-end mb-[10px] mr-[8px]">
          <svg viewBox="0 0 14 8" className="w-[14px] h-[8px]">
            <path d="M1 7l6-5 6 5" fill="none" stroke="#323130" strokeWidth={2} />
          </svg>
        </div>
      </div>
      {/* body */}
      <div className="h-[758px] shrink-0 flex border-b border-[#d8d6d4] box-content">
        <div className="w-[62px] shrink-0 border-r border-[#d2d0ce] relative flex flex-col items-center">
          <div className="absolute left-0 top-0 w-[4px] h-[60px] bg-[#f2c811]" />
          <svg viewBox="0 0 22 22" className="mt-[17px] w-[22px] h-[22px]">
            <path d="M1 1v20h20" fill="none" stroke="#605e5c" strokeWidth={1.3} />
            <path d="M5 6h3v13H5zM10 11h3v8h-3zM16 3h3v16h-3z" fill="none" stroke="#605e5c" strokeWidth={1.3} />
          </svg>
          <svg viewBox="0 0 24 22" className="mt-[38px] w-[24px] h-[22px]">
            <path d="M1 1h22v20H1zM1 7h22M1 14h22M8 1v20M16 1v20" fill="none" stroke="#8a8886" strokeWidth={1.4} />
          </svg>
          <svg viewBox="0 0 28 28" className="mt-[35px] w-[28px] h-[28px]">
            <path d="M1 10h10v11H1zM1 15h10M15 1h12v8H15zM15 5h12M15 17h12v10H15zM15 22h12M11 13h4V9M15 22h-4v-3" fill="#f3f2f1" stroke="#8a8886" strokeWidth={1.4} />
          </svg>
        </div>
        <div className="w-[1318px] shrink-0 flex flex-col">
          <div className="h-[706px] flex">
            {/* report canvas */}
            <div className="w-[1015px] shrink-0 bg-white">
              <div className="h-[47px] pt-[15px] flex items-center pl-[859px]">
                <svg viewBox="0 0 24 24" className="w-[24px] h-[24px]">
                  <path d="M1 1.500h22L15 12v10H9V12z" fill="none" stroke="#8a8886" strokeWidth={1.4} />
                </svg>
                <svg viewBox="0 0 22 20" className="ml-[18px] w-[22px] h-[20px]">
                  <path d="M21 12v7H1V1h11M1 11h9v8M14 8l7-7M15 1h6v6" fill="none" stroke="#8a8886" strokeWidth={1.4} />
                </svg>
                <span className="ml-[22px] -mt-[7px] text-[14px] font-bold tracking-[2px] text-[#605e5c]">...</span>
              </div>
              <div className="h-[527px] flex border-b-[3px] border-dotted border-[#605e5c]">
                <SalesTable />
                <Slicer />
              </div>
            </div>
            <FiltersPane />
          </div>
          {/* page tabs */}
          <div className="h-[52px] flex items-start">
            <svg viewBox="0 0 34 12" className="ml-[8px] mt-[19px] w-[40px] h-[14px]">
              <path d="M6 1v10L1 6zM27 1v10l5-5z" fill="#c8c6c4" />
            </svg>
            <div className="ml-[11px] w-[114px] h-[52px] bg-white border-l border-r border-[#c8c6c4] border-b-[6px] border-b-[#f2c811] text-center text-[17px] pt-[2px] leading-[48px] font-medium text-[#252423]">
              Page 1
            </div>
            <div className="mt-[2px] w-[59px] h-[48px] bg-[#f2c811] flex items-center justify-center">
              <svg viewBox="0 0 16 16" className="w-[17px] h-[17px]">
                <path d="M8 1v14M1 8h14" stroke="#7a7a7a" strokeWidth={3.500} />
              </svg>
            </div>
          </div>
        </div>
        <VizPane />
        <FieldsPane />
      </div>
      {/* status bar */}
      <div className="h-[35px] shrink-0 flex items-center pl-[8px] text-[16px] text-[#605e5c]">
        Page 1 of 1
        <span className="ml-[1500px] text-[#605e5c] font-bold">-</span>
        <div className="ml-[7px] w-[150px] h-[2px] bg-[#605e5c] relative">
          <div className="absolute left-[32px] top-[-7px] w-[6px] h-[16px] bg-[#605e5c]" />
          <div className="absolute left-[74px] top-[-3px] w-[1px] h-[8px] bg-[#605e5c]" />
        </div>
        <span className="ml-[8px] text-[20px] leading-none">+</span>
        <span className="ml-[26px] text-[17px]">53%</span>
        <svg viewBox="0 0 24 24" className="ml-[29px] w-[24px] h-[22px]">
          <rect x={1} y={1} width={22} height={22} fill="none" stroke="#8a8886" strokeWidth={1.2} />
          <path d="M5 9V5h4M15 5h4v4M19 15v4h-4M9 19H5v-4" fill="none" stroke="#484644" strokeWidth={1.4} />
        </svg>
      </div>
      {/* windows taskbar */}
      <div className="h-[46px] shrink-0 flex items-center text-black bg-[linear-gradient(90deg,#e4d8e6_0%,#d9d4dd_30%,#e6e4e6_55%,#e8e8e8_72%,#dcd6d2_85%,#e6dcd6_100%)]">
        <div className="w-[54px] h-full flex items-center justify-center">
          <svg viewBox="0 0 24 24" className="w-[24px] h-[24px]">
            <path d="M0 3.500 10.500 2v9.500H0zM11.500 1.800 24 0v11.500H11.500zM0 12.500h10.500V22L0 20.500zM11.500 12.500H24V24l-12.500-1.800z" fill="#000" />
          </svg>
        </div>
        <div className="w-[54px] h-full flex items-center justify-center">
          <svg viewBox="0 0 24 28" className="w-[24px] h-[28px]">
            <circle cx="14" cy="10" r="9" fill="none" stroke="#111" strokeWidth={1.3} />
            <path d="M8 17 1 27" stroke="#111" strokeWidth={1.3} />
          </svg>
        </div>
        <div className="w-[53px] h-full flex items-center justify-center">
          <svg viewBox="0 0 24 24" className="w-[24px] h-[24px]">
            <path d="M1 1h13M1 23h13M1 6h13v12H1z" fill="none" stroke="#111" strokeWidth={1.4} />
            <path d="M21 0v9M21 15v9" stroke="#111" strokeWidth={1.4} />
            <rect x={19.500} y={10.500} width={3} height={3} fill="#111" />
          </svg>
        </div>
        <TaskIcon className="ml-[12px] w-[42px]" bar="split">
          <svg viewBox="0 0 24 24" className="w-[24px] h-[24px]">
            <path d="M1 2h9l2 3H1z" fill="#d99b1c" />
            <path d="M1 5h22v17H1z" fill="#f7cd5a" />
            <path d="M8 14h8v8h-2v-4h-4v4H8z" fill="#1c76c4" />
          </svg>
        </TaskIcon>
        <TaskIcon className="w-[72px]">
          <svg viewBox="0 0 24 28" className="w-[23px] h-[27px]">
            <rect x={1} y={1} width={22} height={26} rx={1} fill="#3a3a3a" />
            <path d="M23 15v12H11z" fill="#f2c811" />
          </svg>
        </TaskIcon>
        <TaskIcon className="w-[42px]">
          <svg viewBox="0 0 26 28" className="w-[25px] h-[27px]">
            <path d="M13 0 0 11v17h26V11z" fill="#0f5da8" />
            <path d="M3 9h20v12H3z" fill="#fff" />
            <path d="M0 11l13 10 13-10v17H0z" fill="#29a8ea" />
            <path d="M0 28 13 19l13 9z" fill="#56c1f2" />
          </svg>
        </TaskIcon>
        <TaskIcon className="ml-[15px] w-[43px]" bar="split">
          <svg viewBox="0 0 22 28" className="w-[22px] h-[28px]">
            <path d="M4 2h14l4 4-2 13-9 9-9-9L0 6z" fill="#e8431f" />
            <path d="M7 8h8l1 4-2 5-3 4-3-4-2-5z" fill="#fff" />
            <path d="M9 12h1M12 12h1M11 14v3" stroke="#e8431f" strokeWidth={1.3} />
          </svg>
        </TaskIcon>
        <TaskIcon className="w-[65px] pl-[5px]">
          <svg viewBox="0 0 26 28" className="w-[25px] h-[27px]">
            <path d="M19 0l7 3v22l-7 3-12-11-5 4-2-1.500V8.500L2 7l5 4z" fill="#1d87d0" />
            <path d="M19 7v14l-8-7z" fill="#e8e4e8" />
            <path d="M19 0l7 3v22l-7 3z" fill="#2da3ea" />
          </svg>
        </TaskIcon>
        <TaskIcon className="w-[55px] bg-[#f1eff2]" bar="full">
          <svg viewBox="0 0 24 30" className="w-[24px] h-[30px]">
            <rect width={24} height={30} fill="#0f78d4" />
            <path d="M5 16h4v10H5z" fill="#f5d76a" />
            <path d="M10 11h4v15h-4z" fill="#edc232" />
            <path d="M15 4h4v22h-4z" fill="#d9a70c" />
          </svg>
        </TaskIcon>
        <TaskIcon className="ml-[8px] w-[43px]" bar="full">
          <svg viewBox="0 0 22 28" className="w-[21px] h-[27px]">
            <path d="M9 1h4l6 23H3z" fill="#ee7d15" />
            <path d="M7.500 8h7l1 4h-9zM5.500 16h11l1 4h-13z" fill="#f3f3f3" />
            <path d="M1 24h20v3H1z" fill="#d96a0a" />
          </svg>
        </TaskIcon>
        <svg viewBox="0 0 32 36" className="ml-[739px] w-[32px] h-[36px]">
          <path d="M14 4c12-4 18 6 17 14-1 10-9 16-17 16C7 34 2 29 1 23c5 3 12 3 16-2s3-12-3-17z" fill="#f29d1f" />
          <ellipse cx="11" cy="9" rx="9" ry="5.500" fill="#a9cdf0" />
        </svg>
        <span className="ml-[16px] w-[56px] text-[19.5px] pt-[3px] whitespace-nowrap">21°C</span>
        <span className="w-[100px] text-[19.5px] pt-[3px] whitespace-nowrap">Mostly cl...</span>
        <Chev dir="up" className="ml-[14px] w-[18px] h-[11px]" color="#111" />
        <svg viewBox="0 0 20 28" className="ml-[20px] w-[18px] h-[26px]">
          <path d="M3 3c3-2 8-2 11 0M3 25c3 2 8 2 11 0" fill="none" stroke="#111" strokeWidth={1} />
          <rect x={1} y={7} width={13} height={14} rx={2} fill="none" stroke="#111" strokeWidth={1.2} />
          <path d="M14 12l5-3v10l-5-3" fill="none" stroke="#111" strokeWidth={1.2} />
        </svg>
        <svg viewBox="0 0 26 28" className="ml-[13px] w-[24px] h-[26px]">
          <path d="M1 5 19 1v20L1 24z" fill="none" stroke="#111" strokeWidth={1.2} />
          <path d="M12 9c-3-2-5 0-5 3M7 14c2 3 5 2 6-1" fill="none" stroke="#111" strokeWidth={1.1} />
          <circle cx="19" cy="21" r="5.500" fill="#1d6fd1" />
        </svg>
        <svg viewBox="0 0 24 14" className="ml-[13px] w-[24px] h-[14px]">
          <path d="M.6.6h20.800v12.800H.6zM22 5h2v4h-2z" fill="none" stroke="#111" strokeWidth={1.2} />
          <rect x={2} y={2} width={4} height={10} fill="#111" />
        </svg>
        <svg viewBox="0 0 20 20" className="ml-[16px] w-[20px] h-[20px]">
          <path d="M1 19C2 10 9 2 19 1M5 19c1-6 6-11 13-13M9 19c1-3 4-6 8-8" fill="none" stroke="#111" strokeWidth={1} />
          <circle cx="16" cy="18" r="1.500" fill="#111" />
        </svg>
        <svg viewBox="0 0 22 20" className="ml-[13px] w-[22px] h-[20px]">
          <path d="M1 7h4l6-6v18l-6-6H1z" fill="none" stroke="#111" strokeWidth={1.1} />
          <path d="M14 7c1 2 1 4 0 6M17 4c2 4 2 8 0 12M20 2c2 5 2 11 0 16" fill="none" stroke="#111" strokeWidth={1.1} />
        </svg>
        <span className="ml-[15px] w-[38px] text-[16.5px] whitespace-nowrap">ENG</span>
        <span className="ml-[15px] w-[50px] text-[16.5px] whitespace-nowrap">02:27</span>
        <svg viewBox="0 0 24 28" className="ml-[25px] w-[24px] h-[28px]">
          <path d="M0 0h24v21h-8l-4 5-4-5H0z" fill="#000" />
          <path d="M5 6h14M5 10h14M5 14h9" stroke="#fff" strokeWidth={1.2} />
        </svg>
      </div>
    </div>
  )
}

function TaskIcon({ className, bar, children }: { className: string; bar?: "split" | "full"; children: ReactNode }) {
  return (
    <div className={"h-full shrink-0 flex items-center justify-center relative " + className}>
      {children}
      {bar === "split" && (
        <div className="absolute left-0 bottom-0 w-full h-[3px] bg-[#0f78d4]">
          <div className="ml-[70%] h-full bg-[#6cb0e8]" />
        </div>
      )}
      {bar === "full" && <div className="absolute left-0 bottom-0 w-full h-[3px] bg-[#0f78d4]" />}
    </div>
  )
}

export default App
